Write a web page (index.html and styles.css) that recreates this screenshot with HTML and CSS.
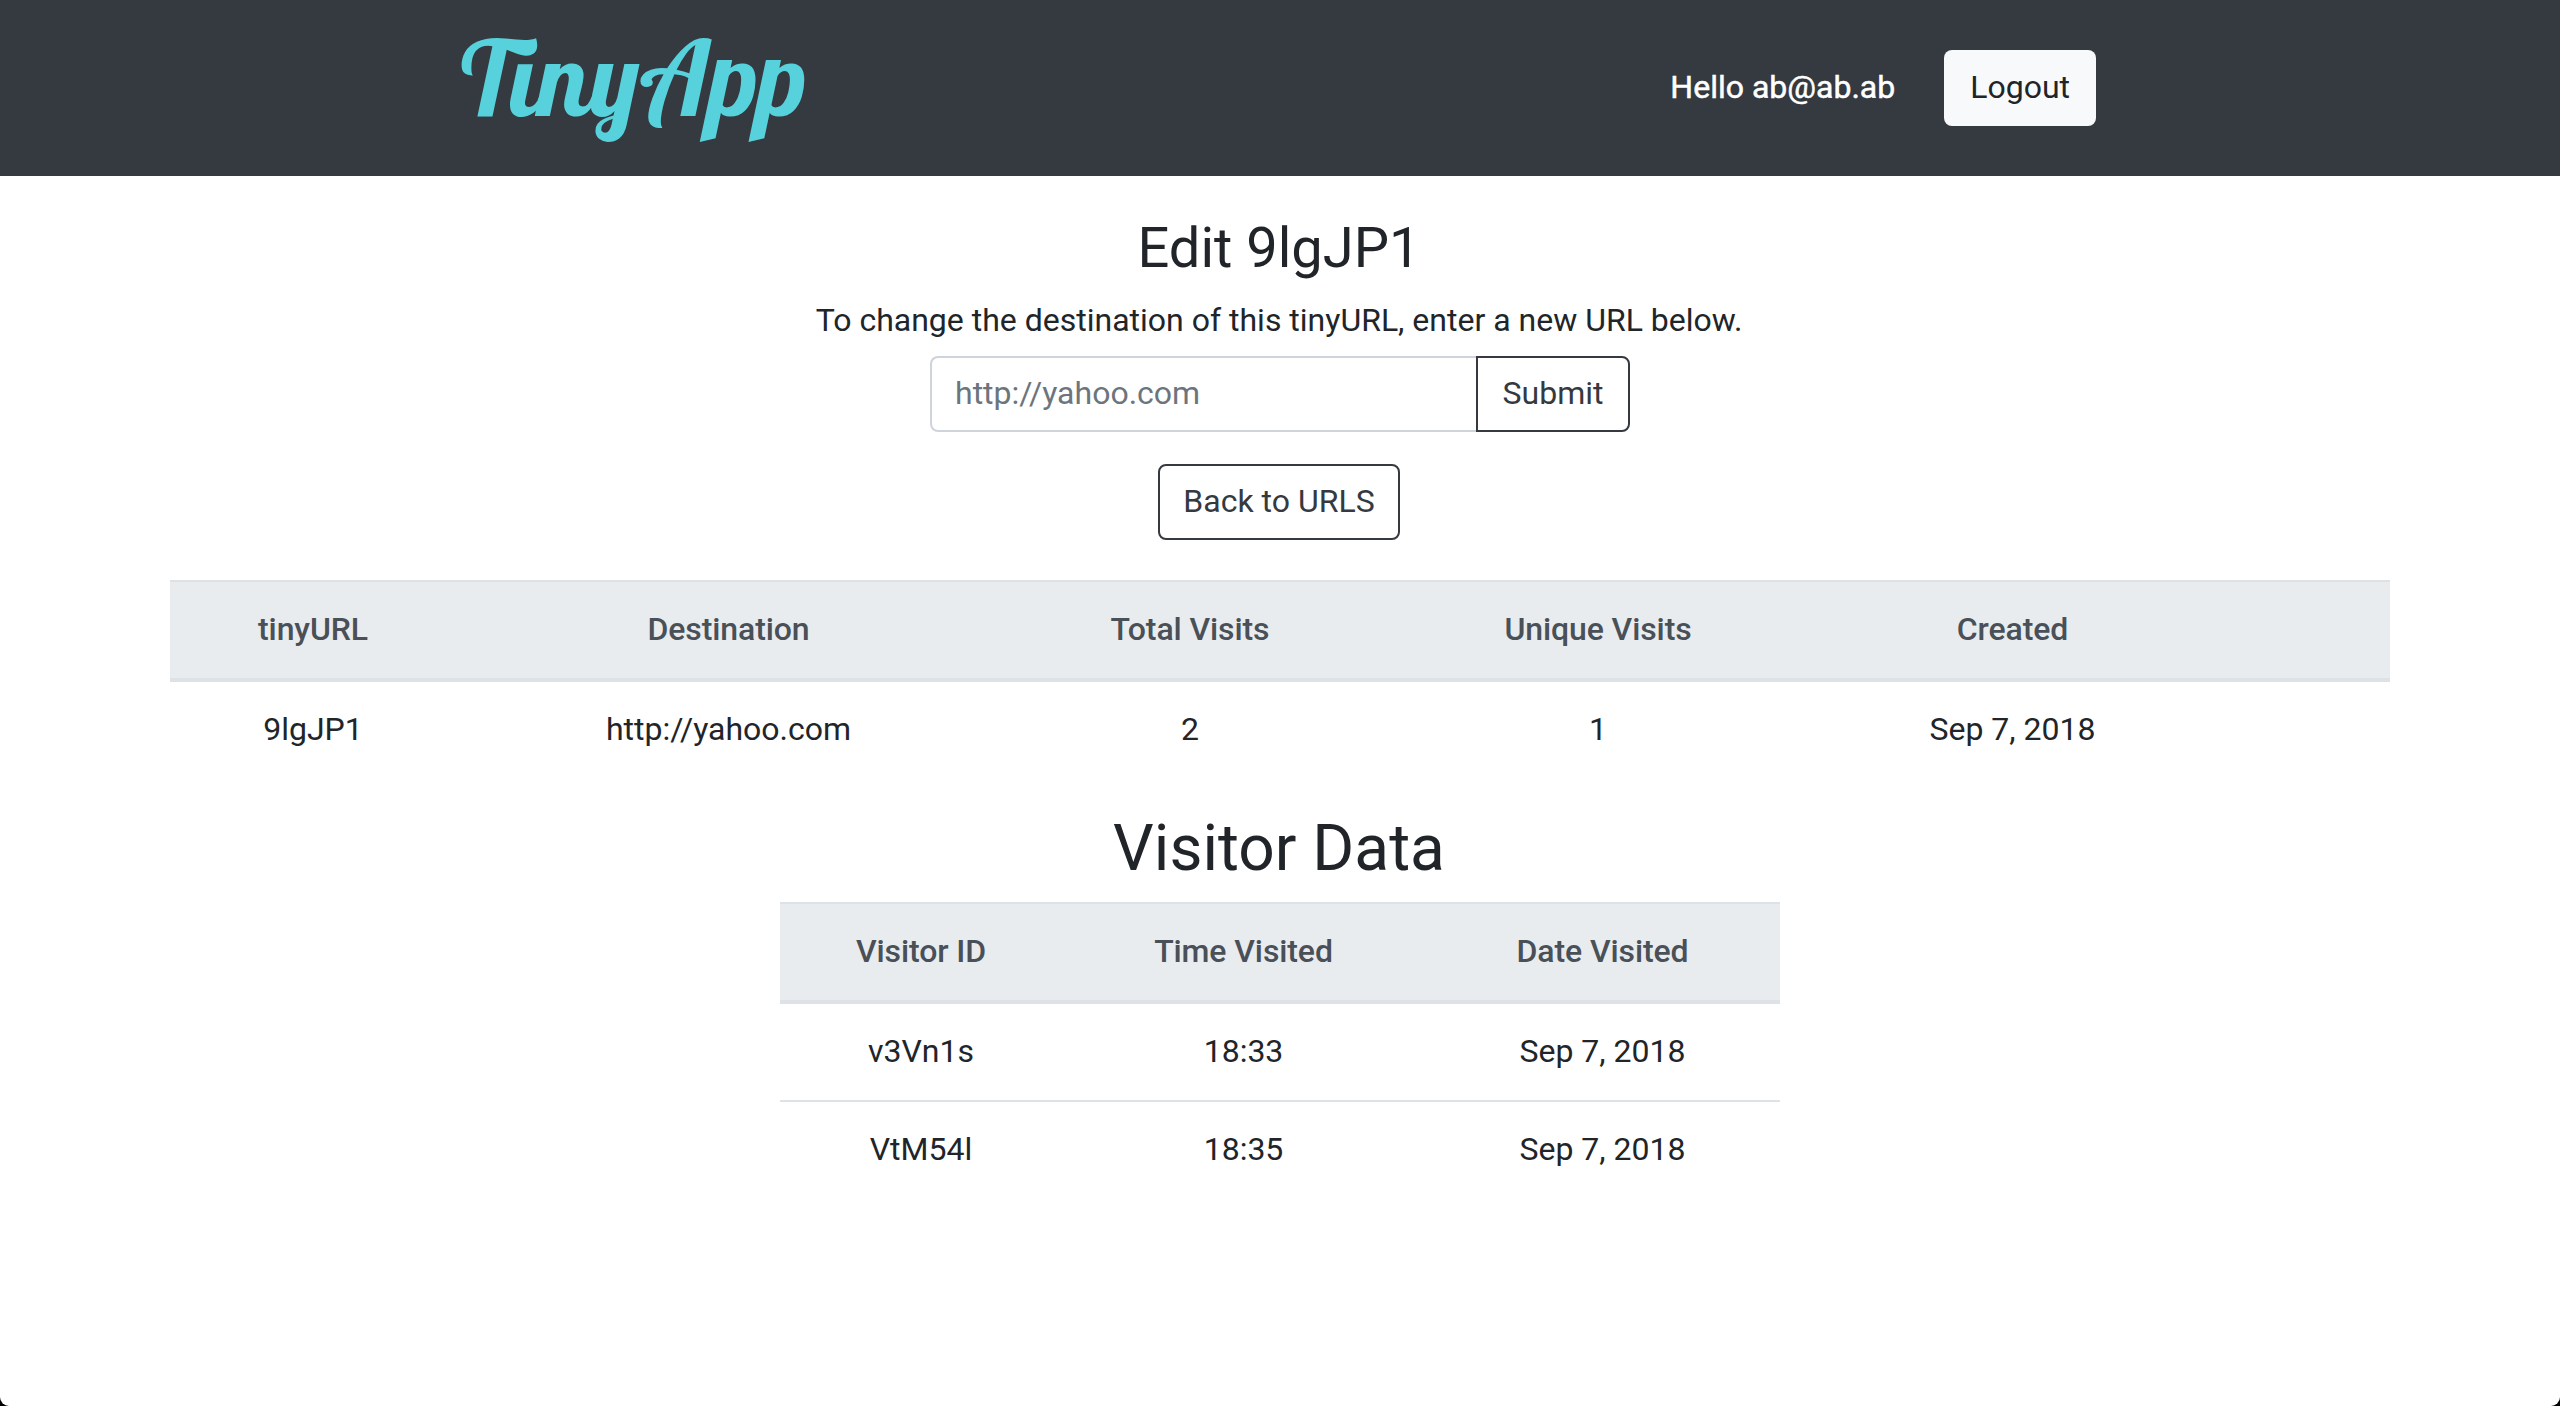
FILE: index.html
```html
<!DOCTYPE html>
<html lang="en">
<head>
<meta charset="utf-8">
<title>TinyApp</title>
<link rel="stylesheet" href="styles.css">
</head>
<body>
<div class="window">
  <header class="navbar">
    <div class="navbar-inner">
      <a class="brand">TinyApp</a>
      <div class="account">
        <span class="greeting">Hello ab@ab.ab</span>
        <button class="btn btn-light">Logout</button>
      </div>
    </div>
  </header>
  <main class="content">
    <h3 class="title">Edit 9lgJP1</h3>
    <p class="hint">To change the destination of this tinyURL, enter a new URL below.</p>
    <form class="input-group">
      <input class="url-input" type="text" placeholder="http://yahoo.com">
      <button class="btn btn-outline submit" type="button">Submit</button>
    </form>
    <button class="btn btn-outline back">Back to URLS</button>
    <table class="table urls">
      <colgroup><col class="u1"><col class="u2"><col class="u3"><col class="u4"><col class="u5"><col></colgroup>
      <thead><tr><th>tinyURL</th><th>Destination</th><th>Total Visits</th><th>Unique Visits</th><th>Created</th><th></th></tr></thead>
      <tbody><tr><td>9lgJP1</td><td>http://yahoo.com</td><td>2</td><td>1</td><td>Sep 7, 2018</td><td></td></tr></tbody>
    </table>
    <h2 class="subtitle">Visitor Data</h2>
    <table class="table visitors">
      <colgroup><col class="v1"><col class="v2"><col></colgroup>
      <thead><tr><th>Visitor ID</th><th>Time Visited</th><th>Date Visited</th></tr></thead>
      <tbody>
        <tr><td>v3Vn1s</td><td>18:33</td><td>Sep 7, 2018</td></tr>
        <tr><td>VtM54l</td><td>18:35</td><td>Sep 7, 2018</td></tr>
      </tbody>
    </table>
  </main>
</div>
</body>
</html>
```
FILE: styles.css
```css
* { box-sizing: border-box; }
html { background: #000; }
body {
  margin: 0;
  font: 400 32px/48px Roboto, sans-serif;
  color: #212529;
}
.window {
  height: 1406px;
  overflow: hidden;
  background: #fff;
  border-radius: 0 0 9px 9px;
}
.navbar { height: 176px; background: #343a40; }
.navbar-inner {
  width: 1632px;
  height: 100%;
  margin: 0 auto;
  display: flex;
  justify-content: space-between;
  align-items: center;
}
.brand {
  margin-left: -3px;
  padding-bottom: 23px;
  font: 400 104.4px/120px Lobster, Roboto, sans-serif;
  color: #57d1db;
}
.account { display: flex; align-items: center; gap: 49px; }
.greeting { padding-bottom: 2px; color: #fff; -webkit-text-stroke: 0.5px #fff; }
.btn {
  height: 76px;
  padding: 0 24px 2px;
  border: 2px solid transparent;
  border-radius: 8px;
  font: inherit;
  white-space: nowrap;
}
.btn-light { background: #f8f9fa; color: #212529; }
.btn-outline { background: transparent; border-color: #343a40; color: #343a40; }
.back { width: 242px; margin-right: 2px; padding: 0 0 2px; }
.content {
  display: flex;
  flex-direction: column;
  align-items: center;
  padding-top: 39px;
}
.title { margin: 0 2px 14px 0; font-size: 56px; font-weight: 400; line-height: 67px; }
.hint { margin: 0 2px 0 0; height: 60px; }
.input-group { display: flex; width: 700px; margin: 0 0 32px; }
.url-input {
  flex: 1;
  min-width: 0;
  height: 76px;
  padding: 0 23px 2px;
  border: 2px solid #ced4da;
  border-right: 0;
  border-radius: 8px 0 0 8px;
  font: inherit;
}
.url-input::placeholder { color: #6c757d; opacity: 1; }
.submit { width: 154px; border-radius: 0 8px 8px 0; }
.table { table-layout: fixed; border-spacing: 0; text-align: center; }
.table th {
  height: 102px;
  padding: 23px 0 25px;
  background: #e9ecef;
  border-top: 2px solid #dee2e6;
  border-bottom: 4px solid #dee2e6;
  color: #495057;
  font-weight: 500;
  letter-spacing: -0.1px;
}
.table td { padding: 23px 0 25px; }
.table tbody tr + tr td { border-top: 2px solid #dee2e6; }
.urls { width: 2220px; margin-top: 40px; }
.u1 { width: 286px; }
.u2 { width: 545px; }
.u3 { width: 378px; }
.u4 { width: 438px; }
.u5 { width: 391px; }
.subtitle { margin: 32px 2px 15px 0; font-size: 64px; font-weight: 400; line-height: 77px; }
.visitors { width: 1000px; }
.v1 { width: 282px; }
.v2 { width: 363px; }
```
